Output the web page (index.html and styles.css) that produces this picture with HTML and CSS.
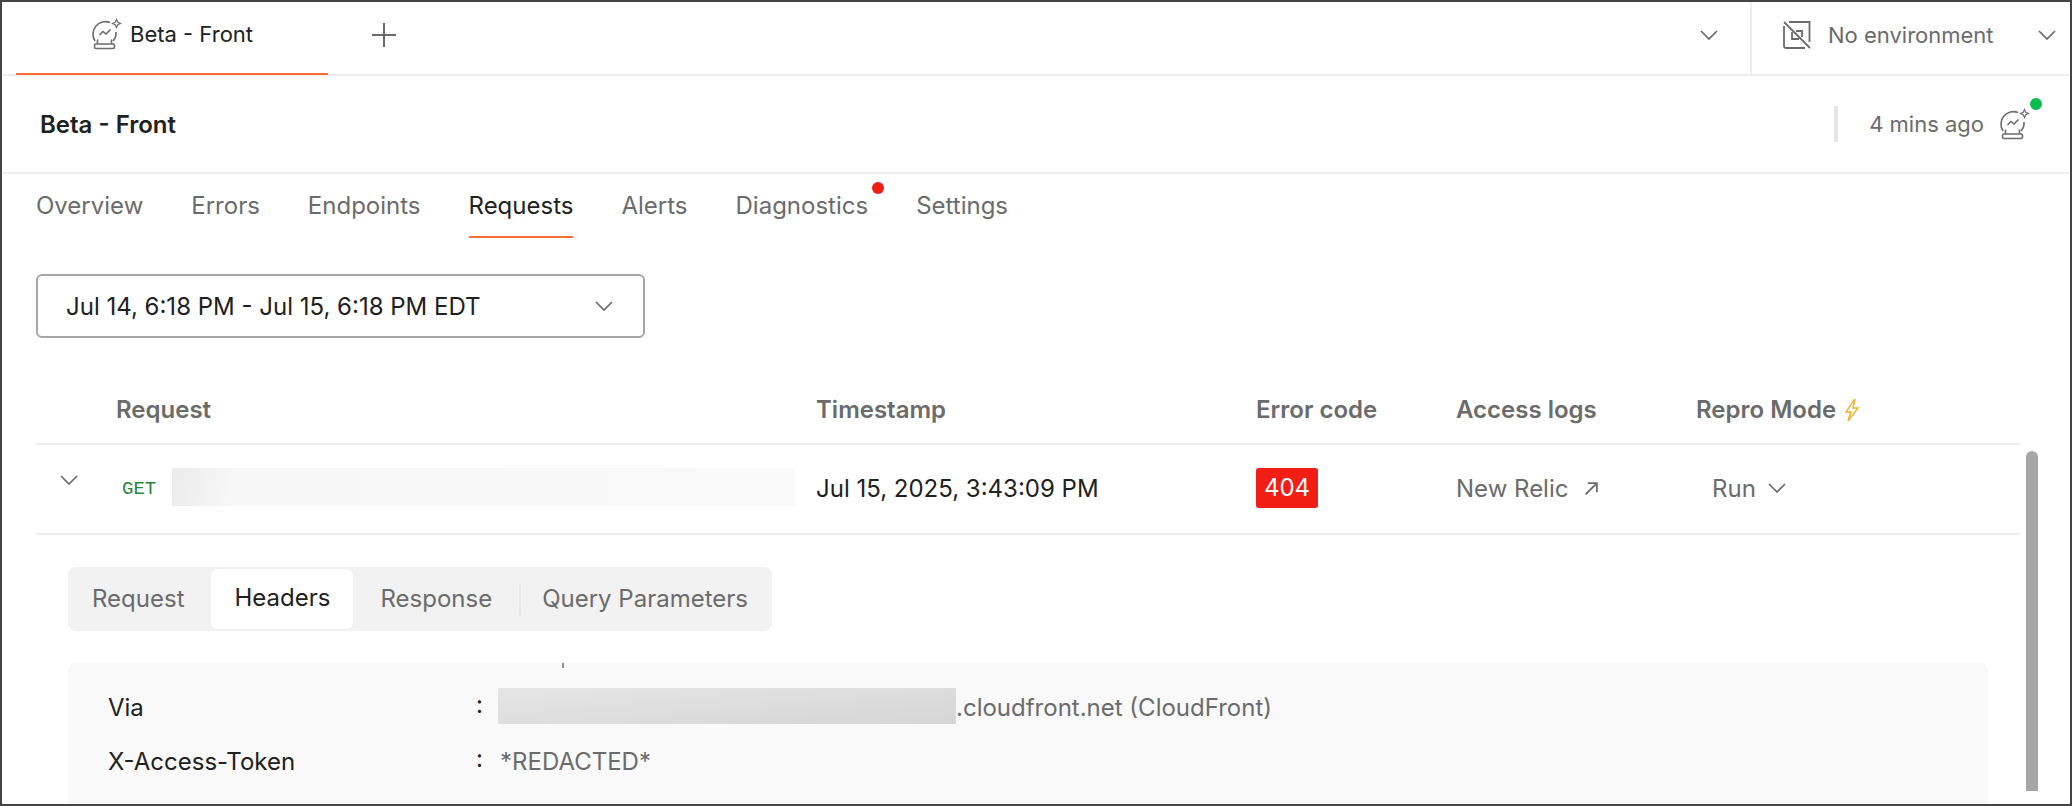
FILE: index.html
```html
<!DOCTYPE html>
<html lang="en">
<head>
<meta charset="utf-8">
<title>Beta - Front</title>
<link rel="stylesheet" href="styles.css">
</head>
<body>
<div class="frame">
  <header class="topbar">
    <div class="tab-active">
      <svg class="ball" viewBox="0 0 32 32" fill="none" stroke="#6b6b6b" stroke-width="1.600"><path d="M20 4.500A12.500 12.500 0 0 0 5 23M26 14a12 12 0 0 1-3 9"/><path d="M9.500 17l3.500-3.500 3 2.500 4.500-4.500"/><path d="M26.500 1.500l1.300 2.700 2.700 1.300-2.700 1.300-1.300 2.700-1.300-2.700-2.700-1.300 2.700-1.300z" stroke-width="1.200"/><path d="M7.500 21.500v4M21.500 21.500v4"/><rect x="4.500" y="26" width="20" height="4.500" rx="1.500"/></svg>
      <span>Beta - Front</span>
    </div>
    <svg class="plus" viewBox="0 0 24 24" stroke="#6b6b6b" stroke-width="2"><path d="M12 0v24M0 12h24"/></svg>
    <svg class="chev tabs-chev" viewBox="0 0 18 10" fill="none" stroke="#6b6b6b" stroke-width="1.700"><path d="M1 1l8 8 8-8"/></svg>
    <div class="env">
      <svg class="noenv" viewBox="0 0 28 28" fill="none" stroke="#6b6b6b" stroke-width="1.800"><path d="M6 1h20.500v20M22 27H3a2 2 0 0 1-2-2V5"/><path d="M1 1l26 26"/><path d="M9 11v7h7M13 10h6v6"/></svg>
      <span class="env-name">No environment</span>
      <svg class="chev" viewBox="0 0 18 10" fill="none" stroke="#6b6b6b" stroke-width="1.700"><path d="M1 1l8 8 8-8"/></svg>
    </div>
  </header>

  <section class="titlebar">
    <h1 class="title">Beta - Front</h1>
    <div class="status">
      <span class="status-sep"></span>
      <span class="status-time">4 mins ago</span>
      <span class="status-icon">
        <svg class="ball" viewBox="0 0 32 32" fill="none" stroke="#6b6b6b" stroke-width="1.600"><path d="M20 4.500A12.500 12.500 0 0 0 5 23M26 14a12 12 0 0 1-3 9"/><path d="M9.500 17l3.500-3.500 3 2.500 4.500-4.500"/><path d="M26.500 1.500l1.300 2.700 2.700 1.300-2.700 1.300-1.300 2.700-1.300-2.700-2.700-1.300 2.700-1.300z" stroke-width="1.200"/><path d="M7.500 21.500v4M21.500 21.500v4"/><rect x="4.500" y="26" width="20" height="4.500" rx="1.500"/></svg>
        <i class="dot-green"></i>
      </span>
    </div>
  </section>

  <main class="content">
    <nav class="nav">
      <a class="nav-item">Overview</a>
      <a class="nav-item">Errors</a>
      <a class="nav-item">Endpoints</a>
      <a class="nav-item is-active">Requests</a>
      <a class="nav-item">Alerts</a>
      <a class="nav-item">Diagnostics<i class="dot-red"></i></a>
      <a class="nav-item">Settings</a>
    </nav>

    <div class="range">
      <span>Jul 14, 6:18 PM - Jul 15, 6:18 PM EDT</span>
      <svg class="chev" viewBox="0 0 18 10" fill="none" stroke="#6b6b6b" stroke-width="1.700"><path d="M1 1l8 8 8-8"/></svg>
    </div>

    <div class="table">
      <div class="thead grid">
        <span>Request</span>
        <span>Timestamp</span>
        <span>Error code</span>
        <span>Access logs</span>
        <span class="repro">Repro Mode
          <svg class="bolt" viewBox="0 0 16 24" fill="none" stroke="#f6b02e" stroke-width="1.400"><path d="M11 1L2 14h5l-3 9 10-13H9z"/></svg>
        </span>
      </div>
      <div class="trow grid">
        <div class="cell-req">
          <svg class="chev row-chev" viewBox="0 0 18 10" fill="none" stroke="#6b6b6b" stroke-width="1.700"><path d="M1 1l8 8 8-8"/></svg>
          <span class="method">GET</span>
          <span class="redact-light"></span>
        </div>
        <span class="time">Jul 15, 2025, 3:43:09 PM</span>
        <span><b class="badge">404</b></span>
        <span class="link">New Relic
          <svg class="arrow" viewBox="0 0 14 14" fill="none" stroke="#6b6b6b" stroke-width="1.700"><path d="M1.500 12.500L12 2M3.500 2H12v8.500"/></svg>
        </span>
        <span class="run">Run
          <svg class="chev" viewBox="0 0 18 10" fill="none" stroke="#6b6b6b" stroke-width="1.700"><path d="M1 1l8 8 8-8"/></svg>
        </span>
      </div>
    </div>

    <div class="detail">
      <div class="segment">
        <span class="seg">Request</span>
        <span class="seg is-on">Headers</span>
        <span class="seg">Response</span>
        <span class="seg-sep"></span>
        <span class="seg">Query Parameters</span>
      </div>
      <div class="panel">
        <i class="tick"></i>
        <div class="hdr">
          <span class="hdr-key">Via</span>
          <span class="hdr-colon">:</span>
          <span class="hdr-val"><span class="redact-dark"></span>.cloudfront.net (CloudFront)</span>
        </div>
        <div class="hdr">
          <span class="hdr-key">X-Access-Token</span>
          <span class="hdr-colon">:</span>
          <span class="hdr-val hdr-val-pad">*REDACTED*</span>
        </div>
      </div>
    </div>
    <div class="scrollthumb"></div>
  </main>
</div>
</body>
</html>
```

FILE: styles.css
```css
* { box-sizing: border-box; }
html, body { margin: 0; height: 100%; overflow: hidden; background: #fff; }
body { font-family: Inter, "Liberation Sans", sans-serif; font-size: 24px; color: #212121; }
.frame { width: 2072px; height: 806px; border: 2px solid #444; display: flex; flex-direction: column; overflow: hidden; position: relative; }

.chev { width: 18px; height: 10px; display: block; flex: none; }

.topbar { height: 74px; flex: none; display: flex; align-items: center; border-bottom: 2px solid #ededed; font-size: 22px; }
.tab-active { width: 312px; height: 74px; margin-left: 14px; border-bottom: 2px solid #ff6c37; display: flex; align-items: center; padding: 0 0 6px 74px; gap: 8px; flex: none; }
.ball { width: 32px; height: 32px; display: block; flex: none; }
.plus { width: 24px; height: 24px; margin: -6px 0 0 44px; flex: none; }
.tabs-chev { margin: -6px 32px 0 auto; }
.env { width: 320px; height: 72px; border-left: 2px solid #ededed; display: flex; align-items: center; padding: 0 0 6px 31px; align-self: flex-start; flex: none; }
.noenv { width: 28px; height: 28px; flex: none; }
.env-name { margin-left: 17px; color: #6b6b6b; }
.env .chev { margin-left: auto; margin-right: 14px; }

.titlebar { height: 98px; flex: none; display: flex; align-items: center; justify-content: space-between; padding-left: 38px; border-bottom: 2px solid #ededed; }
.title { margin: 0; font-size: 24px; font-weight: 600; color: #212121; }
.status { display: flex; align-items: center; color: #6b6b6b; font-size: 22px; }
.status-sep { width: 4px; height: 36px; background: #e6e6e6; }
.status-time { margin-left: 31px; }
.status-icon { position: relative; margin-left: 14px; margin-right: 40px; }
.dot-green { position: absolute; width: 12px; height: 12px; border-radius: 50%; background: #0cbb52; right: -12px; top: -10px; }

.content { flex: 1; position: relative; padding: 0 0 0 34px; min-height: 0; }
.nav { display: flex; gap: 48px; height: 64px; }
.nav-item { position: relative; height: 64px; line-height: 64px; color: #6b6b6b; }
.nav-item.is-active { color: #212121; border-bottom: 2px solid #ff6c37; }
.dot-red { position: absolute; width: 12px; height: 12px; border-radius: 50%; background: #eb2013; right: -16px; top: 8px; }

.range { width: 609px; height: 64px; margin-top: 36px; border: 2px solid #a6a6a6; border-radius: 6px; display: flex; align-items: center; justify-content: space-between; padding: 0 30px 0 28px; color: #212121; }

.table { width: 1984px; margin-top: 30px; }
.grid { display: grid; grid-template-columns: 780px 440px 200px 240px 1fr; align-items: center; }
.thead { height: 77px; padding-top: 8px; border-bottom: 2px solid #ededed; color: #6b6b6b; font-weight: 600; }
.thead > span:first-child { padding-left: 80px; }
.repro { display: flex; align-items: center; gap: 8px; }
.bolt { width: 16px; height: 24px; display: block; flex: none; }
.trow { height: 90px; padding-bottom: 2px; border-bottom: 2px solid #ededed; }
.cell-req { display: flex; align-items: center; height: 38px; margin-bottom: 2px; }
.row-chev { margin: -14px 0 0 24px; }
.method { margin: 3px 0 0 44px; font-family: "Liberation Mono", monospace; font-size: 19px; color: #26873a; width: 50px; flex: none; }
.redact-light { width: 623px; height: 38px; background: linear-gradient(100deg, #ebebeb 0, #f7f7f7 10%, #f9f9f9 100%); flex: none; }
.time { color: #212121; }
.badge { display: inline-block; width: 62px; height: 40px; line-height: 40px; text-align: center; background: #f01e14; color: #fff; border-radius: 3px; font-weight: 400; }
.link { display: flex; align-items: center; color: #6b6b6b; gap: 16px; }
.arrow { width: 15px; height: 15px; display: block; flex: none; }
.run { display: flex; align-items: center; color: #6b6b6b; gap: 12px; padding-left: 16px; }

.detail { padding: 32px 0 0 32px; width: 1920px; }
.segment { width: 704px; height: 64px; background: #f2f2f2; border-radius: 8px; display: flex; align-items: center; padding: 0 2px 0 24px; color: #6b6b6b; }
.seg { padding-bottom: 2px; }
.seg.is-on { width: 142px; height: 60px; line-height: 58px; margin-left: 27px; text-align: center; background: #fff; border-radius: 6px; color: #212121; box-shadow: 0 0 1px rgba(0,0,0,.08); }
.seg.is-on + .seg { margin-left: 27px; }
.seg-sep { width: 2px; height: 32px; background: #e6e6e6; margin: 0 21px 0 27px; }

.panel { position: relative; margin-top: 32px; width: 1920px; height: 200px; background: #f9f9f9; border-radius: 8px 8px 0 0; padding: 17px 0 0 40px; }
.tick { position: absolute; left: 494px; top: 0; width: 2px; height: 5px; background: #909090; }
.hdr { display: flex; align-items: center; height: 54px; }
.hdr-key { width: 368px; flex: none; color: #212121; }
.hdr-colon { width: 22px; flex: none; margin-top: -6px; color: #212121; }
.hdr-val { display: flex; align-items: center; color: #6b6b6b; }
.hdr-val-pad { padding-left: 2px; }
.redact-dark { display: block; width: 458px; height: 36px; margin-top: -2px; background: linear-gradient(175deg, #e6e6e6 0, #d5d5d5 100%); }

.scrollthumb { position: absolute; left: 2024px; top: 277px; width: 12px; height: 340px; background: #a6a6a6; border-radius: 6px 6px 0 0; }
```
